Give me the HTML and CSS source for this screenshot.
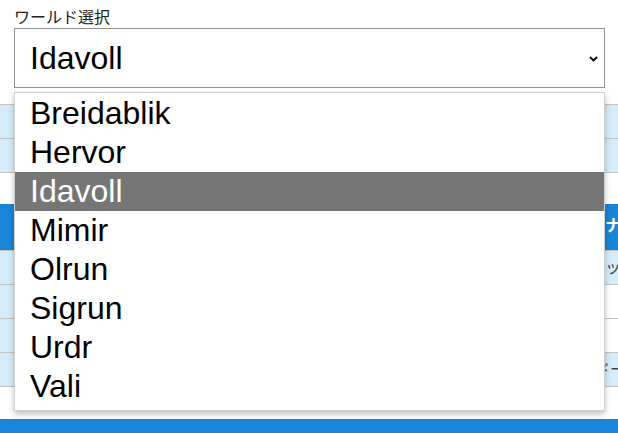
FILE: index.html
```html
<!DOCTYPE html>
<html lang="ja">
<head>
  <meta charset="UTF-8" />
  <meta name="viewport" content="width=device-width, initial-scale=1.0"/>
  <title>ワールド選択</title>
  <link rel="stylesheet" href="styles.css">
</head>
<body>

  <!-- World picker -->
  <div class="picker">
    <label class="pickerLabel">ワールド選択</label>
    <div class="selectBox">
      <span class="selectValue">Idavoll</span>
      <svg class="chevron" width="9" height="6" viewBox="0 0 9 6">
        <path d="M1 1 L4.5 4.5 L8 1" fill="none" stroke="#000" stroke-width="1.8"/>
      </svg>
    </div>

    <!-- Open list -->
    <ul class="dropdown">
      <li>Breidablik</li>
      <li>Hervor</li>
      <li class="selected">Idavoll</li>
      <li>Mimir</li>
      <li>Olrun</li>
      <li>Sigrun</li>
      <li>Urdr</li>
      <li>Vali</li>
    </ul>
  </div>

  <!-- Status table -->
  <div class="infoTable">
    <div class="row"><div class="cell"></div><div class="cell"></div></div>
    <div class="row"><div class="cell"></div><div class="cell"></div></div>
  </div>

  <div class="dataTable">
    <div class="row head"><div class="cell"></div><div class="cell far">ナス</div></div>
    <div class="row"><div class="cell"></div><div class="cell far">ッフ</div></div>
    <div class="row"><div class="cell"></div><div class="cell plain"></div></div>
    <div class="row"><div class="cell"></div><div class="cell plain"></div></div>
    <div class="row"><div class="cell"></div><div class="cell near">ドーム</div></div>
  </div>

  <div class="bottomBar"></div>

</body>
</html>
```

FILE: styles.css
```css
body {
  font-family: "Liberation Sans", Arial, "Noto Sans CJK JP", sans-serif;
  color: #000;
  background-color: #fff;
  margin: 0;
  overflow: hidden;
}

.picker {
  position: relative;
  padding: 8px 13px 0 14px;
}

.pickerLabel {
  display: block;
  font-size: 16px;
  line-height: 20px;
  color: #222;
}

.selectBox {
  height: 58px;
  border: 1px solid #8f8f8f;
  display: flex;
  align-items: center;
  justify-content: space-between;
  padding: 0 6px 0 15px;
  font-size: 32px;
}

.chevron {
  margin-top: 2px;
}

.dropdown {
  position: absolute;
  top: 92px;
  left: 14px;
  width: 589px;
  margin: 0;
  padding: 1px 0 4px;
  list-style: none;
  background-color: #fff;
  border: 1px solid #d0d0d0;
  box-shadow: 0 3px 6px rgba(0,0,0,0.25);
  z-index: 2;
}

.dropdown li {
  height: 39px;
  line-height: 39px;
  padding-left: 15px;
  font-size: 32px;
}

.dropdown .selected {
  background-color: #767676;
  color: #fff;
}

.infoTable {
  margin-top: 16px;
}

.row {
  display: grid;
  grid-template-columns: 590px 1fr;
  border-top: 1px solid #c4c4c4;
}

.cell {
  background-color: #d6ecfa;
  height: 33px;
  line-height: 33px;
  font-size: 16px;
  color: #444;
  white-space: nowrap;
  overflow: hidden;
}

.infoTable .row:last-child {
  border-bottom: 1px solid #c4c4c4;
}

.dataTable {
  margin-top: 31px;
}

.dataTable .head {
  border-top: none;
}

.dataTable .head .cell {
  background-color: #1985d8;
  color: #fff;
  font-weight: bold;
  font-size: 16px;
  height: 46px;
  line-height: 44px;
}

.far {
  padding-left: 15px;
}

.near {
  padding-left: 4px;
}

.cell.plain {
  background-color: #fff;
}

.dataTable .row:last-child {
  border-bottom: 1px solid #c4c4c4;
}

.bottomBar {
  margin-top: 32px;
  height: 20px;
  background-color: #1985d8;
}
```
